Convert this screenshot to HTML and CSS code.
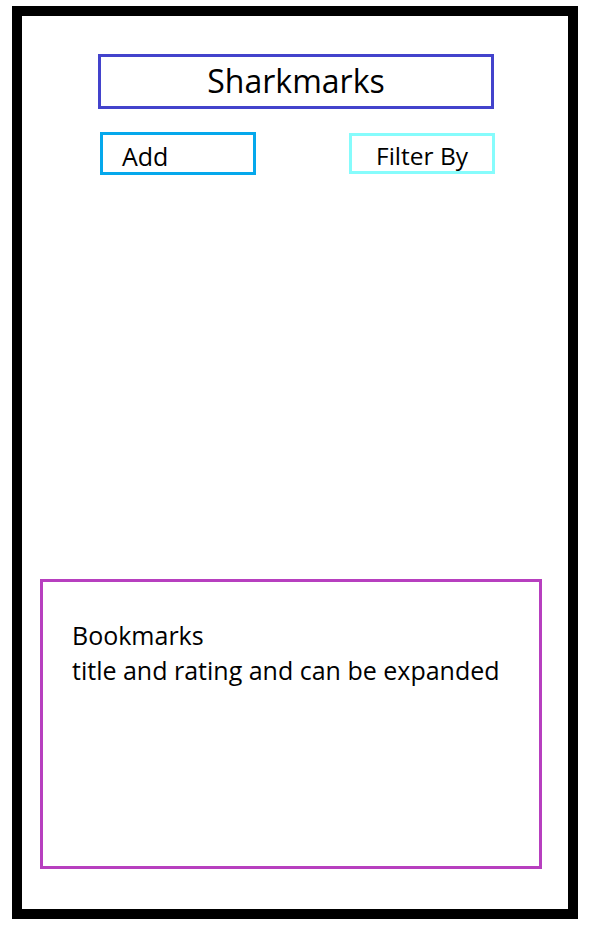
FILE: index.html
```html
<!DOCTYPE html>
<html lang="en">
<head>
  <meta charset="UTF-8">
  <meta name="viewport" content="width=device-width, initial-scale=1.0">
  <title>Sharkmarks</title>
  <link rel="stylesheet" href="styles.css">
</head>
<body>
  <div class="phone">
    <h1 class="app-title">Sharkmarks</h1>

    <div class="toolbar">
      <div class="add-btn">Add</div>
      <div class="filter-btn">Filter By</div>
    </div>

    <div class="bookmarks">
      <p>Bookmarks</p>
      <p>title and rating and can be expanded</p>
    </div>
  </div>
</body>
</html>
```

FILE: styles.css
```css
/* General Styles */
* {
  box-sizing: border-box;
}

body {
  font-family: "Open Sans", Arial, sans-serif;
  background-color: white;
  color: black;
  margin: 0;
  padding: 0;
}

.phone {
  margin: 6px 0 0 12px;
  width: 566px;
  height: 913px;
  border: 10px solid black;
  display: flex;
  flex-direction: column;
}

.app-title {
  margin: 38px 0 0 76px;
  width: 396px;
  height: 55px;
  border: 3px solid #4343cc;
  font-size: 32px;
  font-weight: normal;
  text-align: center;
  line-height: 48px;
}

.toolbar {
  margin: 23px 0 0 78px;
  width: 395px;
  display: flex;
  justify-content: space-between;
  align-items: flex-start;
}

.add-btn {
  width: 156px;
  height: 43px;
  border: 3px solid #05a8ec;
  padding-left: 19px;
  font-size: 25px;
  line-height: 42px;
}

.filter-btn {
  margin-top: 1px;
  width: 146px;
  height: 41px;
  border: 3px solid #86fcfc;
  text-align: center;
  font-size: 24.5px;
  line-height: 40px;
}

.bookmarks {
  margin: 404px 0 0 18px;
  width: 502px;
  height: 290px;
  border: 3px solid #b73fbf;
  padding: 36px 0 0 29px;
}

.bookmarks p {
  margin: 0;
  font-size: 25px;
  line-height: 35px;
}
```
